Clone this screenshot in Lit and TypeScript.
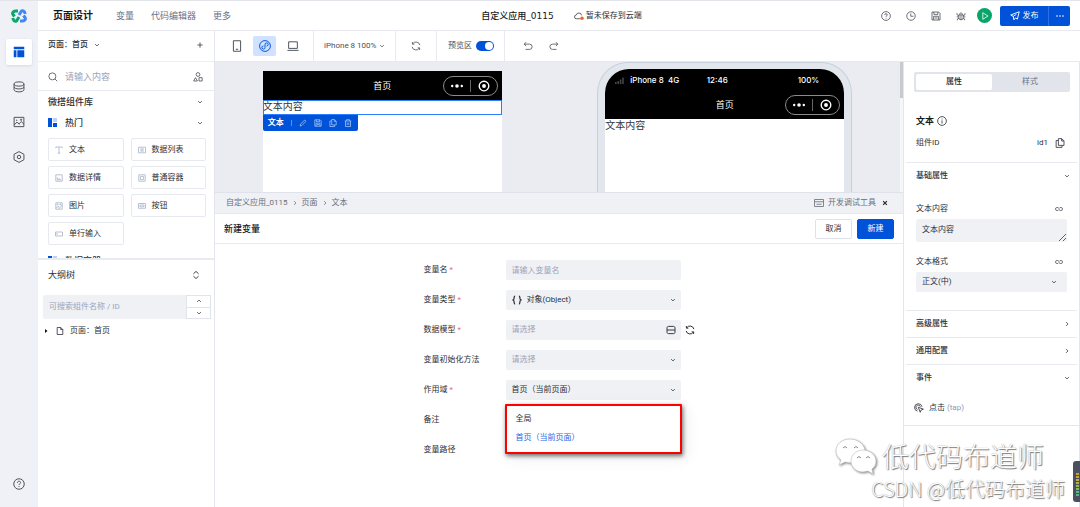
import { LitElement, html, svg, css, nothing } from "lit";
import type { TemplateResult } from "lit";
import { customElement, state } from "lit/decorators.js";
import { classMap } from "lit/directives/class-map.js";

/* All glyphs are drawn on a 16 x 16 grid with a stroke of currentColor. */
const GLYPHS: Record<string, TemplateResult> = {
  layout: svg`<path fill="currentColor" stroke="none" d="M1 1h14v3.4H1zM1 5.6h3.6V15H1zM5.8 5.6H15V15H5.8z"/>`,
  database: svg`<ellipse cx="8" cy="4" rx="6.6" ry="2.8"/><path d="M1.4 4v7.6c0 1.6 3 2.9 6.6 2.9s6.6-1.3 6.6-2.9V4M1.4 7.8c0 1.6 3 2.8 6.6 2.8s6.6-1.2 6.6-2.8"/>`,
  picture: svg`<path d="M1.5 1.8h13v12.4h-13zM1.5 12l4-4 3 3.4M8 10.6l3-3.2 3.5 3.4"/><circle cx="10.8" cy="5" r=".9"/><circle cx="5" cy="5.6" r=".4"/>`,
  hexagon: svg`<path d="M8 .8l6.6 3.6v7.2L8 15.2 1.4 11.6V4.4z"/><circle cx="8" cy="8" r="2.3"/>`,
  help: svg`<circle cx="8" cy="8" r="7"/><path d="M5.9 6.4c0-1.3.9-2.1 2.1-2.1s2.1.8 2.1 1.9c0 1.4-2.1 1.6-2.1 3.1M8 10.8v1.2"/>`,
  clock: svg`<circle cx="8" cy="8" r="6.8"/><path d="M7.6 4v4.4H12"/>`,
  save: svg`<path d="M1.6 1.6h10.6l2.2 2.2v10.6H1.6zM4.6 1.8v3.6h6.4V1.8M4.2 14.2V8.4h7.6v5.8M5.8 11.2h4.4"/>`,
  bug: svg`<path d="M4.6 6.2h6.8v4.6a3.4 3.4 0 01-6.8 0zM5.4 6c0-3.6 5.2-3.6 5.2 0M8 6.2v8M4.6 7.6L1.6 6V3.4M11.4 7.6l3-1.6V3.4M1 9.4h3.6M11.4 9.4H15M4.8 11.8l-2.6 1v2M11.2 11.8l2.6 1v2"/>`,
  play: svg`<path d="M3.6 1.4L14 8 3.6 14.6z"/>`,
  plane: svg`<path d="M14.8 1.2L1.2 6.4l4 2.2 1 5.6 2.6-3.2 3 2z M5.2 8.6l5-3.4"/>`,
  dots: svg`<g fill="currentColor" stroke="none"><circle cx="2" cy="8" r="1.6"/><circle cx="8" cy="8" r="1.6"/><circle cx="14" cy="8" r="1.6"/></g>`,
  down: svg`<path d="M3 5.5l5 5 5-5"/>`,
  up: svg`<path d="M3 10.5l5-5 5 5"/>`,
  right: svg`<path d="M5.5 3l5 5-5 5"/>`,
  sort: svg`<path d="M2.8 5.6L8 .9l5.2 4.7M2.8 10.4L8 15.1l5.2-4.7"/>`,
  plus: svg`<path d="M8 1v14M1 8h14"/>`,
  search: svg`<circle cx="7" cy="7" r="5.6"/><path d="M11.2 11.2l3.6 3.6"/>`,
  blocks: svg`<circle cx="8" cy="4" r="3"/><path d="M4 9l3 5.4H1zM9.6 9h5v5.4h-5z"/>`,
  phone: svg`<path d="M3.2 1h9.6v14H3.2zM6.4 12.4h3.2"/>`,
  mini: svg`<circle cx="8" cy="8" r="7.2"/><path d="M8 10a2.1 2.1 0 11-2.1-2.1M8 10V6a2.1 2.1 0 112.1 2.1"/>`,
  laptop: svg`<path d="M2.2 2.4h11.6v8.8H2.2zM.6 13.8h14.8"/>`,
  refresh: svg`<path d="M1.8 9.4a6.3 6.3 0 0011.5 2M14.2 6.6a6.3 6.3 0 00-11.5-2M2.2 1.6v3.4h3.2M13.8 14.4V11h-3.2"/>`,
  undo: svg`<path d="M5 1.8L1.8 5 5 8.2M2 5h8.4a4 4 0 010 8.4H4"/>`,
  redo: svg`<path d="M11 1.8L14.2 5 11 8.2M14 5H5.6a4 4 0 000 8.4H12"/>`,
  pencil: svg`<path d="M2 14l1-3.6L11.4 2 14 4.6 5.6 13z"/>`,
  copy: svg`<path d="M5.4 1h5.4l3.6 3.6v7.2H5.4zM10.6 1.2v3.6h3.6M5 4H1.8v11h9.4v-2.8"/>`,
  trash: svg`<path d="M1.4 4h13.2M5 3.8V1.4h6v2.4M3 4v11h10V4M6.4 7v5M9.6 7v5"/>`,
  text: svg`<path d="M1.6 4.4V2h12.8v2.4M8 2v12.4M5.4 14.4h5.2"/>`,
  list: svg`<path d="M1 2.4h14v11.2H1zM4.6 5.8h6.800M4.600 8h6.800M4.600 10.200h6.800"/>`,
  chart: svg`<path d="M1.6 1.6h12.8v12.8H1.6zM4.8 11.4V6.4M8 11.4V8.6M10.4 11.4V9.4M4.4 11.6h7.4"/>`,
  frame: svg`<path d="M1.6 1.6h12.8v12.8H1.6zM4.8 4.8h6.4v6.4H4.8z"/>`,
  image: svg`<path d="M1.6 1.6h12.8v12.8H1.6zM2 12.6l4.4-4.4 3 3 4.8-4.6M9 13.8l-2.6-3"/><circle cx="5" cy="5" r="1.1"/><circle cx="10.6" cy="4.8" r="1.1"/>`,
  button: svg`<path d="M1 3h14v9.6H1zM4 6h8v3.600H4z"/>`,
  field: svg`<path d="M1 4h14v8H1zM4 5.8v4.4"/>`,
  file: svg`<path d="M2.400 1h7.200l4 4V15H2.400zM9.400 1.200V5h4"/>`,
  info: svg`<circle cx="8" cy="8" r="7"/><path d="M8 7v5M8 4.2v1.3"/>`,
  link: svg`<path d="M6.400 11H4a3 3 0 010-6h1.600c2.400 0 2.400 3 2.400 3s0 3 2.400 3H12a3 3 0 000-6H9.600"/>`,
  tap: svg`<path d="M5.6 13A6 6 0 1112.8 6M5.6 10.4A3.6 3.6 0 1110.2 6M6.8 6.8l8.2 3-3.6 1.4-1.4 3.6z"/>`,
  stack: svg`<path d="M1.6 4.6c0-1.4.8-2.4 2.4-2.4h8c1.600 0 2.400 1 2.400 2.400v6.800c0 1.400-.8 2.400-2.400 2.400H4c-1.600 0-2.400-1-2.400-2.400zM1.600 8h12.800"/>`,
  console: svg`<path d="M.8 2.400h14.400v11.200H.8zM.8 6h14.400M4 10h8"/>`,
  close: svg`<path d="M3 3l10 10M13 3L3 13"/>`,
  braces: svg`<path d="M5 1.600C2.800 1.600 3.600 4 3.200 6 3 7.400 1.600 8 1.600 8s1.400.6 1.600 2c.4 2-.4 4.400 1.800 4.400M11 1.600c2.200 0 1.400 2.400 1.800 4.400.2 1.400 1.600 2 1.600 2s-1.400.6-1.600 2c-.4 2 .4 4.400-1.800 4.400"/>`,
};

const icon = (name: string, size: "xs" | "s" | "m" | "l" = "m", weight = 1.3) =>
  html`<svg class="icon ${size}" viewBox="0 0 16 16" stroke-width=${weight} aria-hidden="true">${GLYPHS[name]}</svg>`;

const COMPONENTS = [
  ["text", "文本"],
  ["list", "数据列表"],
  ["chart", "数据详情"],
  ["frame", "普通容器"],
  ["image", "图片"],
  ["button", "按钮"],
  ["field", "单行输入"],
];

@customElement("app-root")
export class AppRoot extends LitElement {
  @state() private tab = "props";
  @state() private preview = true;
  @state() private scope = "首页（当前页面）";

  static styles = css`
    :host {
      display: flex;
      height: 100vh;
      position: relative;
      overflow: hidden;
      box-sizing: border-box;
      border-top: 1px solid #e3e5ea;
      background: #fff;
      color: #2b2f37;
      font: 8px/12px Roboto, "Noto Sans CJK SC", sans-serif;
    }
    *, *::before { box-sizing: border-box; }
    button, input, select, textarea {
      font: inherit; color: inherit; margin: 0; padding: 0; border: 0;
      background: none; border-radius: 0; outline: none; appearance: none;
    }
    button { display: flex; align-items: center; justify-content: center; white-space: nowrap; }
    a { color: inherit; text-decoration: none; }
    h1, h2 { margin: 0; font-size: 9px; font-weight: 500; color: #15181d; }
    .icon { fill: none; stroke: currentColor; flex: none; display: block; width: 10px; height: 10px; }
    .icon.xs { width: 6px; height: 6px; }
    .icon.s { width: 8px; height: 8px; }
    .icon.l { width: 12px; height: 12px; }
    .grow { flex: 1; min-width: 0; }

    /* rail */
    .rail { width: 38px; flex: none; background: #eff1f6; display: flex; flex-direction: column; align-items: center; gap: 9px; padding: 7px 0 10px; color: #4b5059; }
    .logo { width: 16px; height: 16px; margin-bottom: 6px; }
    .rail button { width: 26px; height: 26px; border-radius: 2px; }
    .rail .on { background: #fff; color: #0052d9; box-shadow: 0 1px 3px #0000001a; }
    .rail .last { margin-top: auto; }

    .main { flex: 1; min-width: 0; display: flex; flex-direction: column; }
    .header { height: 30px; flex: none; display: grid; grid-template-columns: 1fr auto 1fr; align-items: center; border-bottom: 1px solid #e8eaef; padding: 0 10px 0 15px; }
    .nav { display: flex; align-items: center; gap: 17px; font-size: 9px; color: #66728a; }
    .nav h1 { font-size: 10px; font-weight: 700; margin-right: 6px; }
    .app { display: flex; align-items: center; gap: 20px; }
    .app h2 { font-family: "DejaVu Sans", "Noto Sans CJK SC", sans-serif; }
    .saved { display: flex; align-items: center; gap: 2px; }
    .tools { display: flex; align-items: center; justify-content: flex-end; color: #4b5059; }
    .tools > .ghost { width: 25px; height: 20px; }
    .tools .play { width: 15px; height: 15px; border-radius: 50%; background: #07a568; color: #fff; margin: 0 8px 0 4px; }
    .publish { display: flex; height: 20px; background: #0052d9; border-radius: 2px; color: #fff; }
    .publish button { width: 48px; gap: 3px; }
    .publish button + button { width: 22px; border-left: 1px solid #2f6fe0; }

    .body { flex: 1; min-height: 0; display: flex; }
    .left { width: 177px; flex: none; display: flex; flex-direction: column; border-right: 1px solid #e3e6ec; }
    .work { flex: 1; min-width: 0; display: flex; flex-direction: column; }

    /* component library */
    .library { flex: 228 1 0; min-height: 0; overflow: hidden; border-bottom: 2px solid #e9ebf0; }
    .row { display: flex; align-items: center; padding: 0 11px 0 10px; }
    .page { height: 31px; border-bottom: 1px solid #eceef2; gap: 6px; padding-bottom: 2px; }
    .page b { font-weight: 500; }
    .find { height: 29px; border-bottom: 1px solid #e9ebf0; gap: 7px; color: #4b5059; padding-top: 2px; }
    .find input { font-size: 9px; height: 18px; }
    ::placeholder { color: #9aa5bb; opacity: 1; }
    .group { height: 21px; font-size: 9px; font-weight: 500; gap: 8px; }
    .hot { width: 9px; height: 9px; }
    .chips { display: grid; grid-template-columns: 1fr 1fr; gap: 5px 7px; padding: 5px 8px 5px 10px; }
    .chips button { height: 23px; border: 1px solid #e6e9ef; border-radius: 2px; justify-content: flex-start; padding: 0 6px; gap: 6px; }
    .chips .icon { color: #a7b3c8; }

    .outline { flex: 248 1 0; min-height: 0; }
    .outline .title { height: 30px; font-size: 9px; padding-right: 14px; }
    .treefind { display: flex; height: 24px; margin: 5px 3px 0 5px; background: #eff1f5; border-radius: 2px; }
    .treefind input { padding: 0 6px; }
    .step { width: 25px; border: 1px solid #e1e4ea; background: #fff; display: grid; }
    .step button + button { border-top: 1px solid #e1e4ea; }
    .tree { height: 24px; padding: 0 6px; gap: 6px; }

    /* toolbar */
    .toolbar { height: 31px; flex: none; display: flex; align-items: stretch; border-bottom: 1px solid #e8eaef; color: #4b5059; }
    .toolbar > div { display: flex; align-items: center; border-right: 1px solid #e8eaef; }
    .toolbar > div:last-child { border: 0; }
    .devices { padding: 0 9px 0 10px; gap: 5px; }
    .devices button { width: 23px; height: 20px; border-radius: 2px; }
    .devices .on { background: #d0e2ff; color: #0052d9; }
    .model { padding: 0 10px; gap: 2px; }
    .model select { width: 53px; }
    .model .icon { pointer-events: none; }
    .reload { width: 41px; justify-content: center; }
    .switch { padding: 0 10px 0 11px; gap: 4px; }
    .switch input { width: 18px; height: 10px; border-radius: 5px; background: #c1c7d2; }
    .switch input::before { content: ""; display: block; width: 8px; height: 8px; margin: 1px; border-radius: 50%; background: #fff; }
    .switch input:checked { background: #0052d9; }
    .switch input:checked::before { margin-left: 9px; }
    .history { padding: 0 18px; gap: 16px; }

    .split { flex: 1; min-height: 0; display: flex; }
    .center { flex: 1; min-width: 0; display: flex; flex-direction: column; border-right: 1px solid #e3e6ec; }
    .canvas { flex: 130 1 0; min-height: 0; overflow: hidden; background: #ebecf1; display: flex; }
    .devicesrow { flex: 1; display: flex; justify-content: space-around; }
    .track { width: 3px; background: #f5f6f8; }
    .track i { display: block; height: 36px; background: #c9cacd; }
    .sheet { width: 239px; background: #fff; margin-top: 9px; }
    .bar { height: 29px; background: #000; color: #fff; display: grid; grid-template-columns: 1fr auto 1fr; align-items: center; padding: 0 4px; font-size: 9px; }
    .capsule { grid-column: 3; justify-self: end; display: flex; align-items: center; justify-content: space-evenly; width: 55px; height: 20px; border: 1px solid #8b8b8b; border-radius: 10px; }
    .bar span { grid-column: 2; }
    .capsule i { width: 1px; height: 12px; background: #666; }
    .copytext { font-size: 10px; line-height: 14px; color: #333; }
    .picked { outline: 1px solid #2b7cff; outline-offset: -1px; height: 15px; }
    .actions { display: inline-flex; align-items: center; height: 16px; padding: 0 6px 0 5px; gap: 7px; background: #0052d9; color: #fff; border-radius: 0 0 2px 2px; }
    .actions i { width: 1px; height: 6px; background: #5c90ea; }
    .actions .icon { color: #c4d8fb; }
    .phone { width: 255px; border: 1px solid #c8d0dc; border-bottom: 0; background: #e2e7ee; border-radius: 31px 31px 0 0; padding: 6px 7px 0; display: flex; flex-direction: column; }
    .screen { flex: 1; background: #fff; border-radius: 24px 24px 0 0; overflow: hidden; }
    .status { height: 21px; background: #000; color: #fff; font-family: Inter, sans-serif; font-weight: 500; display: grid; grid-template-columns: 1fr auto 1fr; align-items: center; padding: 0 25px 0 10px; }
    .status span:first-child { display: flex; gap: 5px; align-items: center; }
    .status span:last-child { text-align: right; }
    .signal { width: 10px; height: 8px; color: #444; }

    /* variable editor */
    .debug { flex: 315 1 0; min-height: 0; }
    .crumbs { height: 22px; background: #eff1f5; border-top: 1px solid #dfe2ea; border-bottom: 1px solid #e6e8ee; display: flex; align-items: center; gap: 4px; padding: 0 15px 0 11px; color: #6a6f79; }
    .crumbs button { gap: 4px; }
    .crumbs .x { color: #22262e; margin-left: 2px; }
    .edit { height: 30px; display: flex; align-items: center; gap: 5px; padding: 0 9px; border-bottom: 1px solid #e8eaef; }
    .edit h2 { flex: 1; }
    .edit button { width: 37px; height: 20px; border: 1px solid #dfe2e9; border-radius: 2px; }
    .edit .primary { background: #0052d9; border-color: #0052d9; color: #fff; }
    .form { display: grid; grid-template-columns: 82px 175px 14px; grid-auto-rows: 20px; gap: 10px 0; justify-content: center; align-items: center; padding-top: 16px; }
    .form label { grid-column: 1; }
    em { color: #e86b74; font-style: normal; margin-left: 2px; }
    .box { position: relative; display: flex; align-items: center; height: 20px; background: #eff1f5; border-radius: 2px; padding: 0 5px 0 6px; gap: 5px; }
    .box input, .box select { flex: 1; min-width: 0; height: 20px; }
    .box .icon { pointer-events: none; }
    .dim { color: #9aa5bb; }
    .again { justify-content: flex-end; }
    .menu { position: absolute; z-index: 2; top: 24px; left: -1px; right: -1px; background: #fff; border: 2px solid #f00; border-radius: 1px; box-shadow: 1px 2px 4px #0000008c, 4px 4px 16px #00000014; padding: 3px 0 5px; display: flex; flex-direction: column; }
    .menu button { justify-content: flex-start; height: 19px; padding: 0 9px; }
    .menu .on { color: #1e66e5; }

    /* properties */
    .props { width: 176px; flex: none; border-right: 1px solid #e3e6ec; display: flex; flex-direction: column; }
    .tabs { display: grid; grid-template-columns: 1fr 1fr; height: 20px; margin: 10px 9px 0 10px; padding: 2px; background: #e1e5eb; border-radius: 2px; color: #66728a; flex: none; }
    .tabs .on { background: #fff; color: #22262e; font-weight: 500; border-radius: 2px; }
    .name { height: 20px; margin: 19px 12px 0; display: flex; align-items: center; gap: 3px; }
    .name h2 { font-weight: 700; }
    .line { display: flex; align-items: center; gap: 7px; padding: 0 14px 0 12px; height: 24px; }
    .ident { margin-bottom: 7px; }
    .event { height: 34px; padding-left: 10px; gap: 5px; }
    .rule { border-top: 1px solid #e8eaef; margin: 0 2px; }
    .section { display: flex; align-items: center; height: 26px; padding: 0 9px 0 12px; font-weight: 500; }
    .field { padding: 10px 12px 0; }
    .field:last-of-type { margin-bottom: 18px; }
    .field .cap { display: flex; align-items: center; height: 20px; }
    .field label { flex: 1; }
    .format { padding-bottom: 18px; }
    .format .box { padding-right: 10px; }
    textarea { display: block; width: 100%; height: 23px; background: #eff1f5; border-radius: 2px; padding: 5px 6px; resize: vertical; overflow: hidden; }
    .cap .icon { margin-right: 4px; }
    .full { border-top: 1px solid #e3e6ec; }
    .tap { color: #8b98b3; }

    /* overlays */
    .mark { position: absolute; right: 15px; bottom: 4px; color: #fff; text-shadow: 1px 1px 1px #777, 0 0 1px #999; text-align: right; pointer-events: none; font-family: "Noto Sans CJK SC", sans-serif; font-weight: 300; }
    .mark p { margin: 0; font-size: 20px; line-height: 28px; }
    .mark .big { display: flex; align-items: center; justify-content: flex-end; gap: 4px; font-size: 27px; line-height: 32px; padding-right: 21px; }
    .mark svg { width: 44px; height: 38px; filter: drop-shadow(1px 1px 1px #888); }
    .meter { position: absolute; right: 0; bottom: 5px; width: 7px; height: 41px; padding: 12px 0 5px 3px; background: #4b5060; border-radius: 3px 0 0 3px; }
    .meter i { display: block; width: 3px; height: 24px; background: repeating-linear-gradient(#0000 0 2px, #4b5060 2px 3px), linear-gradient(#d49a3e, #a8b94c 50%, #37b6a0); }
  `;

  private capsule() {
    return html`<div class="capsule">
      <svg class="icon l" viewBox="0 0 16 16"><g fill="currentColor" stroke="none"><circle cx="1.600" cy="8" r="1.600"/><circle cx="8" cy="8" r="2.400"/><circle cx="14.400" cy="8" r="1.600"/></g></svg>
      <i></i>
      <svg class="icon l" viewBox="0 0 16 16" stroke-width="1.800"><circle cx="8" cy="8" r="6.400"/><circle cx="8" cy="8" r="2.600" fill="currentColor" stroke="none"/></svg>
    </div>`;
  }

  private renderRail() {
    return html`<nav class="rail">
      <svg class="logo" viewBox="0 0 32 32" fill="none" stroke-width="6" stroke-linejoin="round">
        <path stroke="#0aa66c" d="M14 6H9C4 6 2 10 4 13l3 4M4 20c0 5 3 7 7 6l5-8"/>
        <path stroke="#3f87f5" d="M18 26h5c5 0 7-4 5-7l-3-4M28 12c0-5-3-7-7-6l-5 8"/>
      </svg>
      <button class="on" aria-label="页面">${icon("layout", "l")}</button>
      <button aria-label="数据">${icon("database", "l")}</button>
      <button aria-label="素材">${icon("picture", "l")}</button>
      <button aria-label="设置">${icon("hexagon", "l")}</button>
      <button class="last" aria-label="帮助">${icon("help", "l")}</button>
    </nav>`;
  }

  private renderHeader() {
    return html`<header class="header">
      <nav class="nav">
        <h1>页面设计</h1>
        <a href="#var">变量</a><a href="#code">代码编辑器</a><a href="#more">更多</a>
      </nav>
      <div class="app">
        <h2>自定义应用_0115</h2>
        <div class="saved">
          <svg class="icon" viewBox="0 0 16 16" stroke="#8792a8" stroke-width="1.200"><path d="M10 12.400H4a3 3 0 01-.4-6 4.400 4.400 0 018.600.6"/><circle cx="12.800" cy="11.400" r="2.800" fill="#f0642d" stroke="none"/></svg>
          <span>暂未保存到云端</span>
        </div>
      </div>
      <div class="tools">
        ${["help", "clock", "save", "bug"].map((n) => html`<button class="ghost" aria-label=${n}>${icon(n)}</button>`)}
        <button class="play" aria-label="预览">${icon("play", "s", 1.600)}</button>
        <div class="publish">
          <button>${icon("plane", "m", 1.500)}发布</button>
          <button aria-label="更多">${icon("dots", "s", 1)}</button>
        </div>
      </div>
    </header>`;
  }

  private renderLeft() {
    const hot = html`<svg class="hot" viewBox="0 0 9 9"><path fill="#0052d9" d="M0 0h4v9H0zM5 5h4v4H5z"/><path fill="#bcd2fb" d="M5 0h4v4H5z"/></svg>`;
    return html`<aside class="left">
      <section class="library">
        <div class="row page"><b>页面：首页</b>${icon("down", "xs", 2)}<span class="grow"></span>${icon("plus", "xs", 2)}</div>
        <div class="row find">${icon("search", "m")}<input class="grow" aria-label="搜索组件" placeholder="请输入内容" />${icon("blocks", "m")}</div>
        <div class="row group"><span class="grow">微搭组件库</span>${icon("down", "xs", 2)}</div>
        <div class="row group">${hot}<span class="grow">热门</span>${icon("down", "xs", 2)}</div>
        <div class="chips">${COMPONENTS.map(([i, t]) => html`<button>${icon(i, "s", 1.600)}${t}</button>`)}</div>
        <div class="row group">${hot}<span class="grow">数据容器</span></div>
      </section>
      <section class="outline">
        <div class="row title"><span class="grow">大纲树</span>${icon("sort", "s", 1.800)}</div>
        <div class="treefind">
          <input class="grow" aria-label="搜索大纲" placeholder="可搜索组件名称 / ID" />
          <div class="step"><button aria-label="上一个">${icon("up", "xs", 2)}</button><button aria-label="下一个">${icon("down", "xs", 2)}</button></div>
        </div>
        <div class="row tree">
          <svg class="icon xs" viewBox="0 0 6 6"><path fill="#111" stroke="none" d="M1 1l2.500 2L1 5z"/></svg>
          ${icon("file", "s", 1.600)}<span>页面：首页</span>
        </div>
      </section>
    </aside>`;
  }

  private renderToolbar() {
    return html`<div class="toolbar">
      <div class="devices">
        <button aria-label="手机">${icon("phone", "l")}</button>
        <button class="on" aria-label="小程序">${icon("mini", "l")}</button>
        <button aria-label="电脑">${icon("laptop", "l")}</button>
      </div>
      <div class="model"><select aria-label="机型"><option>iPhone 8 100%</option></select>${icon("down", "xs", 2)}</div>
      <div class="reload">${icon("refresh", "m")}</div>
      <div class="switch">
        <label for="preview">预览区</label>
        <input id="preview" type="checkbox" .checked=${this.preview} @change=${() => (this.preview = !this.preview)} />
      </div>
      <div class="history"><button aria-label="撤销">${icon("undo", "m")}</button><button aria-label="重做">${icon("redo", "m")}</button></div>
    </div>`;
  }

  private renderCanvas() {
    return html`<div class="canvas">
      <div class="devicesrow">
        <div class="sheet">
          <div class="bar"><span>首页</span>${this.capsule()}</div>
          <div class="copytext picked">文本内容</div>
          <div class="actions"><b>文本</b><i></i>${["pencil", "save", "copy", "trash"].map((n) => icon(n, "s"))}</div>
        </div>
        ${this.preview
          ? html`<div class="phone"><div class="screen">
              <div class="status">
                <span><svg class="signal" viewBox="0 0 10 8" fill="currentColor"><path d="M0 6h1.600v2H0zM2.400 5H4v3H2.400zM4.800 3.500h1.600V8H4.800zM7.200 1.500h1.600V8H7.200z"/></svg>iPhone 8&nbsp; 4G</span>
                <span>12:46</span><span>100%</span>
              </div>
              <div class="bar"><span>首页</span>${this.capsule()}</div>
              <div class="copytext">文本内容</div>
            </div></div>`
          : nothing}
      </div>
      <div class="track"><i></i></div>
    </div>`;
  }

  private renderForm() {
    const req = html`<em>*</em>`;
    return html`<section class="debug">
      <div class="crumbs">
        <span>自定义应用_0115</span>${icon("right", "xs", 2)}<span>页面</span>${icon("right", "xs", 2)}<span>文本</span>
        <span class="grow"></span>
        <button>${icon("console", "m")}开发调试工具</button>
        <button class="x" aria-label="关闭">${icon("close", "xs", 3)}</button>
      </div>
      <div class="edit"><h2>新建变量</h2><button>取消</button><button class="primary">新建</button></div>
      <form class="form">
        <label for="vname">变量名${req}</label>
        <div class="box"><input id="vname" placeholder="请输入变量名" /></div>
        <label for="vtype">变量类型${req}</label>
        <div class="box">${icon("braces", "m", 2)}<select id="vtype"><option>对象(Object)</option></select>${icon("down", "xs", 2)}</div>
        <label for="vmodel">数据模型${req}</label>
        <div class="box"><select id="vmodel" class="dim"><option>请选择</option></select>${icon("stack", "m", 1.500)}</div>
        <button class="again" type="button" aria-label="刷新">${icon("refresh", "m", 1.600)}</button>
        <label for="vinit">变量初始化方法</label>
        <div class="box"><select id="vinit" class="dim"><option>请选择</option></select>${icon("down", "xs", 2)}</div>
        <label for="vscope">作用域${req}</label>
        <div class="box">
          <select id="vscope"><option>${this.scope}</option></select>${icon("down", "xs", 2)}
          <div class="menu">
            ${["全局", "首页（当前页面）"].map(
              (s) => html`<button type="button" class=${classMap({ on: s === this.scope })} @click=${() => (this.scope = s)}>${s}</button>`
            )}
          </div>
        </div>
        <label>备注</label>
        <label>变量路径</label>
      </form>
    </section>`;
  }

  private renderProps() {
    const tab = (id: string, text: string) =>
      html`<button class=${classMap({ on: this.tab === id })} @click=${() => (this.tab = id)}>${text}</button>`;
    const section = (text: string, i: string) =>
      html`<div class="section"><span class="grow">${text}</span>${icon(i, "xs", 2)}</div>`;
    return html`<aside class="props">
      <div class="tabs">${tab("props", "属性")}${tab("style", "样式")}</div>
      <div class="name"><h2>文本</h2>${icon("info", "m")}</div>
      <div class="line ident"><span class="grow">组件ID</span><span>id1</span>${icon("copy", "m")}</div>
      <div class="rule"></div>
      ${section("基础属性", "down")}
      <div class="field">
        <div class="cap"><label for="content">文本内容</label>${icon("link", "s")}</div>
        <textarea id="content">文本内容</textarea>
      </div>
      <div class="field format">
        <div class="cap"><label for="format">文本格式</label>${icon("link", "s")}</div>
        <div class="box"><select id="format"><option>正文(中)</option></select>${icon("down", "xs", 2)}</div>
      </div>
      <div class="rule"></div>
      ${section("高级属性", "right")}
      <div class="rule"></div>
      ${section("通用配置", "right")}
      <div class="rule"></div>
      ${section("事件", "down")}
      <div class="line event">${icon("tap", "m")}<span>点击 <span class="tap">(tap)</span></span></div>
      <div class="full"></div>
    </aside>`;
  }

  render() {
    return html`${this.renderRail()}
      <div class="main">
        ${this.renderHeader()}
        <div class="body">
          ${this.renderLeft()}
          <div class="work">
            ${this.renderToolbar()}
            <div class="split">
              <div class="center">${this.renderCanvas()}${this.renderForm()}</div>
              ${this.renderProps()}
            </div>
          </div>
        </div>
      </div>
      <div class="mark">
        <p class="big">
          <svg viewBox="0 0 44 38" fill="#fff" stroke="#bbb" stroke-width=".6"><path d="M16 2C8 2 2 7 2 14c0 4 2 7 5 9l-2 5 6-3 6 1C30 26 31 20 31 14S24 2 16 2z"/><path d="M29 13c-7 0-12 5-12 11s5 11 12 11l5-1 5 3-1-5c3-2 4-5 4-8 0-6-6-11-13-11z"/><g fill="none" stroke="#888" stroke-width="1"><path d="M9 11q2-3 4 0M20 11q2-3 4 0M23 21q2-3 4 0M32 21q2-3 4 0"/></g></svg>
          <span>低代码布道师</span>
        </p>
        <p>CSDN @低代码布道师</p>
      </div>
      <div class="meter"><i></i></div>`;
  }
}
